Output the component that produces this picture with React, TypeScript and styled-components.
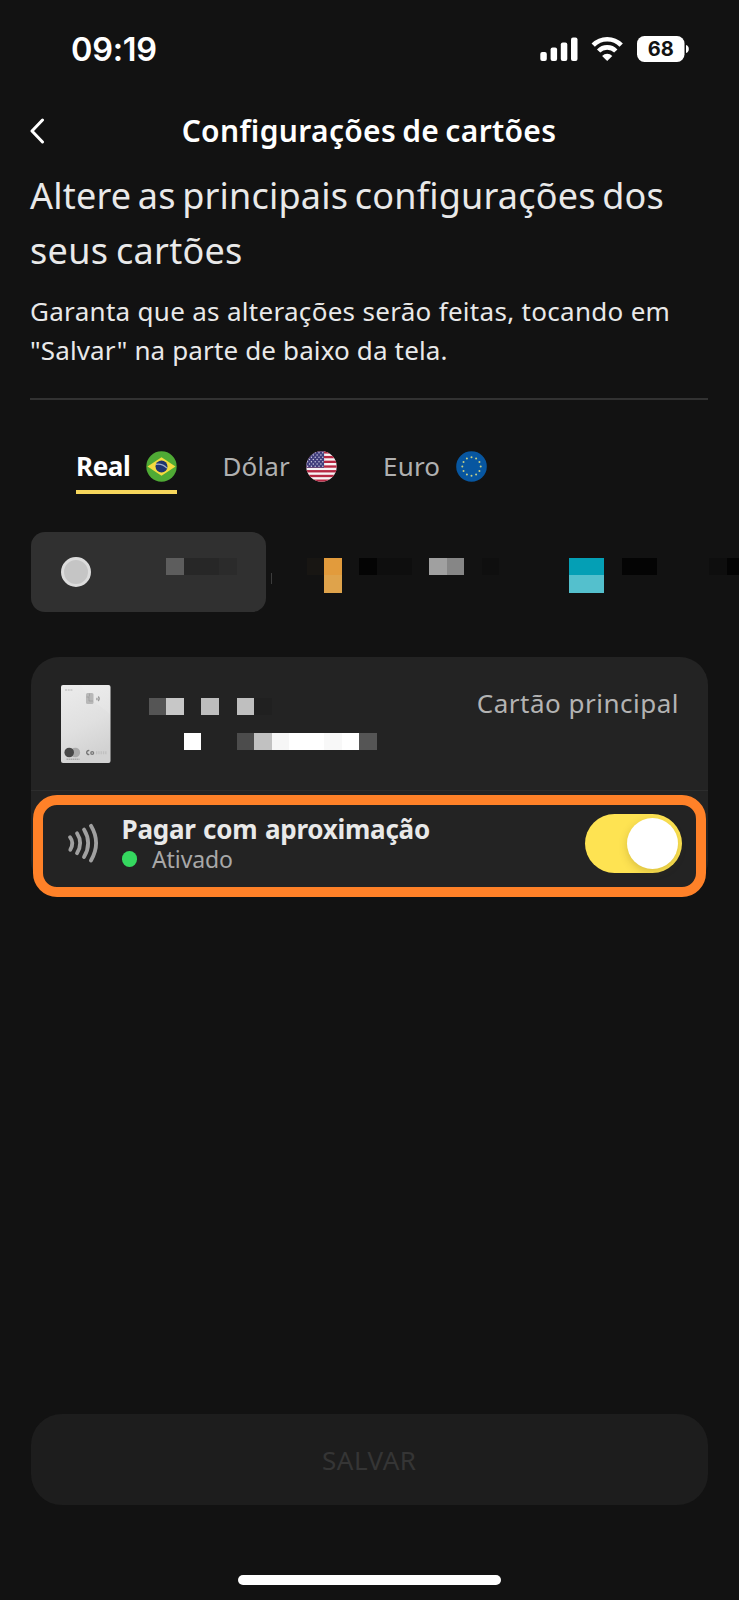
import React from "react";
import styled, { createGlobalStyle } from "styled-components";

const Global = createGlobalStyle`
  * { box-sizing: border-box; }
  body { margin: 0; background: #121212; }
`;

const Screen = styled.div`
  width: 739px;
  height: 1600px;
  display: flex;
  flex-direction: column;
  overflow: hidden;
  background: #121212;
  color: #e9e9e9;
  font-family: "Noto Sans", "Open Sans", sans-serif;
`;

const StatusBar = styled.header`
  height: 99px;
  padding: 0 50px 0 71px;
  display: flex;
  align-items: center;
  justify-content: space-between;
  flex: none;
`;

const Clock = styled.span`
  font: 600 32.5px/40px Inter, sans-serif;
  letter-spacing: -0.3px;
  color: #fff;
`;

const StatusIcons = styled.svg`
  display: block;
  margin-bottom: 1px;
`;

const TitleBar = styled.nav`
  height: 64px;
  padding: 0 31px 0 30px;
  display: grid;
  grid-template-columns: 40px 1fr 40px;
  align-items: center;
  flex: none;
`;

const Line = styled.span<{ $size: number; $lh: number; $weight?: number; $ls?: number; $ws?: number; $color?: string }>`
  display: block;
  white-space: nowrap;
  font-size: ${(p) => p.$size}px;
  line-height: ${(p) => p.$lh}px;
  font-weight: ${(p) => p.$weight ?? 400};
  letter-spacing: ${(p) => p.$ls ?? 0}px;
  word-spacing: ${(p) => p.$ws ?? 0}px;
  color: ${(p) => p.$color ?? "#e9e9e9"};
`;

const PageTitle = styled(Line)`
  margin: 0;
  justify-self: center;
`;

const Intro = styled.section`
  margin: 5px 31px 0 30px;
  border-bottom: 2px solid #323232;
  height: 232px;
  flex: none;
`;

const Heading = styled.h1`
  margin: 0 0 14px;
`;

const Tabs = styled.div`
  display: flex;
  gap: 46px;
  height: 44px;
  margin: 50px 0 0 76px;
  flex: none;
`;

const Tab = styled.div<{ $active?: boolean }>`
  display: flex;
  align-items: flex-start;
  justify-content: space-between;
  height: 44px;
  border-bottom: ${(p) => (p.$active ? "4px solid #f6d65c" : "0")};
`;

const TabLabel = styled(Line)<{ $w: number }>`
  width: ${(p) => p.$w}px;
`;

const Flag = styled.svg`
  display: block;
  margin-top: 0.5px;
`;

const ChipStrip = styled.div`
  display: flex;
  height: 80px;
  margin: 38px 0 0 30.5px;
  flex: none;
  overflow: hidden;
`;

const Chip = styled.div`
  width: 235.5px;
  height: 80px;
  border-radius: 14px;
  background: #303030;
  display: flex;
  flex: none;
  padding: 0 0 0 30px;
`;

const Radio = styled.span`
  width: 30.5px;
  height: 30.5px;
  margin-top: 24.5px;
  border-radius: 50%;
  background: #c5c5c5;
  border: 3px solid #dcdcdc;
  flex: none;
`;

const Sliver = styled.i`
  width: 1px;
  height: 11px;
  margin: 41px 0 0 5px;
  background: #3c3c3c;
  flex: none;
`;

const MosaicRow = styled.div<{ $left?: number; $top?: number }>`
  display: flex;
  height: 17.5px;
  margin: ${(p) => p.$top ?? 0}px 0 0 ${(p) => p.$left ?? 0}px;
`;

const Cell = styled.i<{ $w: number; $c: string; $c2?: string }>`
  flex: none;
  width: ${(p) => p.$w}px;
  height: ${(p) => (p.$c2 ? 35 : 17)}px;
  background: ${(p) => (p.$c2 ? `linear-gradient(${p.$c} 17px, ${p.$c2} 17px)` : p.$c)};
`;

const CardPanel = styled.section`
  position: relative;
  margin: 45px 31px 0 30.5px;
  height: 232px;
  border-radius: 28px;
  background: #232323;
  flex: none;
`;

const CardHeader = styled.div`
  display: flex;
  height: 134px;
  padding: 28px 29px 0 30px;
  border-bottom: 1px solid #2d2d2d;
`;

const CardNumber = styled.div`
  flex: 1;
`;

const PayRow = styled.div`
  display: flex;
  height: 98px;
  padding: 0 26px 0 36px;
`;

const PayText = styled.div`
  flex: 1;
  padding: 23px 0 0 22px;
`;

const Status = styled.div`
  display: flex;
  align-items: center;
  gap: 15px;
  height: 30px;
`;

const Dot = styled.i`
  width: 15.5px;
  height: 15.5px;
  border-radius: 50%;
  background: #35d85f;
`;

const Toggle = styled.div`
  width: 97px;
  height: 59px;
  margin-top: 23px;
  padding: 0 4px;
  border-radius: 30px;
  background: #fee352;
  display: flex;
  align-items: center;
  justify-content: flex-end;
`;

const Knob = styled.i`
  width: 51px;
  height: 51px;
  border-radius: 50%;
  background: #fff;
  box-shadow: 0 3px 9px rgba(80, 65, 0, 0.22);
`;

const Highlight = styled.div`
  position: absolute;
  left: 2.5px;
  top: 138px;
  width: 673px;
  height: 102px;
  border: 10px solid #ff8128;
  border-radius: 24px;
`;

const SaveButton = styled.button`
  margin: auto 31px 0 30.5px;
  height: 91px;
  border: 0;
  border-radius: 31px;
  background: #1d1d1d;
  display: flex;
  align-items: center;
  justify-content: center;
  font-family: inherit;
  flex: none;
`;

const HomeIndicator = styled.div`
  width: 263px;
  height: 10px;
  margin: 70px auto 15px;
  border-radius: 5px;
  background: #fff;
  flex: none;
`;

const ThumbWrap = styled.div`
  flex: none;
  width: 50px;
`;

const WaveWrap = styled.div`
  flex: none;
  padding-top: 32px;
  height: 72px;
  width: 33px;
`;

type Run = [number, string, string?];
const NONE = "transparent";

const Mosaic = ({ runs, left, top }: { runs: Run[]; left?: number; top?: number }) => (
  <MosaicRow $left={left} $top={top}>
    {runs.map(([w, c, c2], i) => (
      <Cell key={i} $w={w} $c={c} $c2={c2} />
    ))}
  </MosaicRow>
);

const Brazil = () => (
  <Flag width="31" height="31" viewBox="0 0 31 31">
    <circle cx="15.5" cy="15.5" r="15.2" fill="#4faa35" />
    <path d="M1.5 15.5 15.5 6.2 29.5 15.5 15.5 24.8Z" fill="#f3dc3f" />
    <circle cx="15.5" cy="15.5" r="6" fill="#20356f" />
    <path d="M10 13.4c4-.8 8 .7 11 3.7" stroke="#9dacc9" strokeWidth="1.1" fill="none" />
  </Flag>
);

const Usa = () => (
  <Flag width="31" height="31" viewBox="0 0 31 31">
    <clipPath id="us">
      <circle cx="15.5" cy="15.5" r="15.2" />
    </clipPath>
    <g clipPath="url(#us)">
      <rect width="31" height="31" fill="#f7f3f5" />
      {[0, 1, 2, 3, 4, 5, 6].map((i) => (
        <rect key={i} y={0.2 + i * 4.72} width="31" height="2.36" fill="#b52742" />
      ))}
      <rect width="18" height="16.7" fill="#403d7c" />
      {[0, 1, 2, 3, 4, 5, 6].map((r) =>
        [0, 1, 2, 3, 4].map((c) => (
          <circle key={`${r}-${c}`} cx={1.6 + c * 3.8 + (r % 2) * 1.9} cy={1.8 + r * 2.25} r="0.7" fill="#d4d2e6" />
        ))
      )}
    </g>
  </Flag>
);

const Europe = () => (
  <Flag width="31" height="31" viewBox="0 0 31 31">
    <circle cx="15.5" cy="15.5" r="15.3" fill="#0756a0" />
    {Array.from({ length: 12 }, (_, i) => (
      <circle
        key={i}
        cx={15.5 + 9.2 * Math.sin((i * Math.PI) / 6)}
        cy={15.5 - 9.2 * Math.cos((i * Math.PI) / 6)}
        r="1"
        fill="#c6cf86"
      />
    ))}
  </Flag>
);

const CardThumb = () => (
  <svg width="50" height="78" viewBox="0 0 50 78">
    <defs>
      <linearGradient id="metal" x1="0" y1="0" x2="0.3" y2="1">
        <stop offset="0" stopColor="#ececec" />
        <stop offset="0.6" stopColor="#e0e0e0" />
        <stop offset="1" stopColor="#d2d2d2" />
      </linearGradient>
    </defs>
    <rect width="49.5" height="78" rx="2" fill="url(#metal)" />
    <path d="M27 12 49 29V2Q49 0 47 0H20Z" fill="#fff" opacity="0.12" />
    <path d="M4 5h8" stroke="#b4b4b4" strokeWidth="1" strokeDasharray="2 .7" />
    <rect x="25" y="8" width="7.5" height="11" rx="1.5" fill="#b8b8b8" />
    <path d="M25.5 12h2.5v4h4M28.5 8.5v3" stroke="#999" strokeWidth="0.7" fill="none" />
    <path d="M35.5 13q1.2 1 0 2M37.2 11.5q2 2 0 4.5" stroke="#999" strokeWidth="1.3" fill="none" />
    <circle cx="14.3" cy="67.5" r="4.8" fill="#aaa" />
    <circle cx="8.2" cy="67.5" r="4.8" fill="#484848" />
    <path d="M5.5 74.2h13" stroke="#aaa" strokeWidth="1.4" strokeDasharray="1.5 .5" />
    <path d="M28.3 65.6a2 2 0 1 0 0 3.8" stroke="#777" strokeWidth="1.4" fill="none" />
    <circle cx="31.2" cy="68" r="1.4" stroke="#777" strokeWidth="1.3" fill="none" />
    <path d="M35 67.8h11" stroke="#c0c0c0" strokeWidth="3" strokeDasharray="1.3 1" />
  </svg>
);

const Contactless = () => (
  <svg width="33" height="40" viewBox="0 0 33 40" fill="none" stroke="#a0a0a0" strokeWidth="3.8" strokeLinecap="round">
    <path d="M3 14.2Q7.4 19.8 3.3 26.8" />
    <path d="M10 10.3Q16.3 20 10 30.2" />
    <path d="M17 6.5Q25.3 20 17 34" />
    <path d="M24 2.8Q34.2 20 24 37.5" />
  </svg>
);

export default function App() {
  return (
    <Screen>
      <Global />
      <StatusBar>
        <Clock>09:19</Clock>
        <StatusIcons width="150" height="28" viewBox="0 0 150 28" fill="#fff">
          <rect x="1.3" y="17" width="6.5" height="9" rx="2" />
          <rect x="11.6" y="12.5" width="6.5" height="13.5" rx="2" />
          <rect x="21.8" y="7.5" width="6.5" height="18.5" rx="2" />
          <rect x="32" y="2.5" width="6.5" height="23.5" rx="2" />
          <g fill="none" stroke="#fff" strokeWidth="4.6">
            <path d="M54.2 10.2a19.5 19.5 0 0 1 28 0" />
            <path d="M59.6 16a12 12 0 0 1 17.2 0" />
          </g>
          <path d="M68.2 26 63.1 20.9a7.3 7.3 0 0 1 10.2 0Z" />
          <rect x="98" y="1" width="47.5" height="26" rx="7.5" />
          <path d="M147 10q2.8.8 2.8 4t-2.8 4Z" />
          <text x="121.8" y="21.2" textAnchor="middle" fill="#121212" fontFamily="Inter, sans-serif" fontWeight="700" fontSize="20">
            68
          </text>
        </StatusIcons>
      </StatusBar>
      <TitleBar>
        <svg width="16" height="26" viewBox="0 0 16 26" fill="none" stroke="#fff" strokeWidth="3" strokeLinecap="round" strokeLinejoin="round">
          <path d="M12.5 2 2 13 12.5 24" />
        </svg>
        <PageTitle as="h2" $size={30} $lh={40} $weight={600} $ls={0.33} $ws={-2} $color="#fff">
          Configurações de cartões
        </PageTitle>
      </TitleBar>
      <Intro>
        <Heading>
          <Line $size={36} $lh={55} $ls={0.2} $ws={-3}>Altere as principais configurações dos</Line>
          <Line $size={36} $lh={55} $ls={0.3} $ws={-2}>seus cartões</Line>
        </Heading>
        <Line $size={26} $lh={39} $ls={0.3}>Garanta que as alterações serão feitas, tocando em</Line>
        <Line $size={26} $lh={39} $ls={0.14}>"Salvar" na parte de baixo da tela.</Line>
      </Intro>
      <Tabs>
        <Tab $active>
          <TabLabel $w={69.5} $size={26} $lh={32} $weight={700} $ls={-0.4} $color="#fff">Real</TabLabel>
          <Brazil />
        </Tab>
        <Tab>
          <TabLabel $w={83.5} $size={26} $lh={32} $ls={0.1} $color="#b0b0b0">Dólar</TabLabel>
          <Usa />
        </Tab>
        <Tab>
          <TabLabel $w={73} $size={26} $lh={32} $ls={0.2} $color="#b0b0b0">Euro</TabLabel>
          <Europe />
        </Tab>
      </Tabs>
      <ChipStrip>
        <Chip>
          <Radio />
          <Mosaic left={75} top={26} runs={[[18, "#5d5d5d"], [35, "#272727"], [18, "#2b2b2b"]]} />
        </Chip>
        <Sliver />
        <Mosaic
          left={35}
          top={26}
          runs={[
            [17, "#181613"], [18, "#e29b3c", "#dfa34b"], [17, NONE], [18, "#040404"], [35, "#0e0e0e"], [17, NONE],
            [18, "#a0a0a0"], [17, "#868686"], [18, NONE], [17, "#0f0f0f"], [70, NONE], [35, "#049fb5", "#54c0cd"],
            [18, NONE], [35, "#040404"], [52, NONE], [18, "#0e0e0e"], [18, "#040404"],
          ]}
        />
      </ChipStrip>
      <CardPanel>
        <CardHeader>
          <ThumbWrap>
            <CardThumb />
          </ThumbWrap>
          <CardNumber>
            <Mosaic
              left={38.5}
              top={13}
              runs={[[17, "#555"], [18, "#c7c7c7"], [17, NONE], [18, "#bebebe"], [18, NONE], [17, "#bfbfbf"], [18, "#202020"]]}
            />
            <Mosaic
              left={73.5}
              top={17.5}
              runs={[[17, "#fff"], [36, NONE], [17, "#4c4c4c"], [18, "#c1c1c1"], [17, "#f6f6f6"], [35, "#fff"], [18, "#f8f8f8"], [17, "#fff"], [18, "#555"]]}
            />
          </CardNumber>
          <Line $size={26} $lh={36} $ls={0.5} $color="#b3b3b3">Cartão principal</Line>
        </CardHeader>
        <PayRow>
          <WaveWrap>
            <Contactless />
          </WaveWrap>
          <PayText>
            <Line $size={26} $lh={30} $weight={700} $ls={-0.25} $ws={1}>Pagar com aproximação</Line>
            <Status>
              <Dot />
              <Line $size={23} $lh={30} $ls={-0.1} $color="#a8a8a8">Ativado</Line>
            </Status>
          </PayText>
          <Toggle>
            <Knob />
          </Toggle>
        </PayRow>
        <Highlight />
      </CardPanel>
      <SaveButton>
        <Line $size={26} $lh={34} $ls={0.5} $color="#353535">SALVAR</Line>
      </SaveButton>
      <HomeIndicator />
    </Screen>
  );
}
